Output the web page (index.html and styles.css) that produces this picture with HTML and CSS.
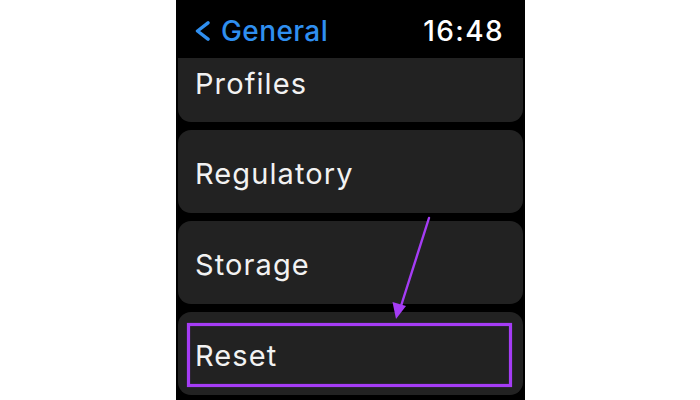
FILE: index.html
```html
<!DOCTYPE html>
<html>
<head>
<meta charset="utf-8">
<link rel="stylesheet" href="styles.css">
</head>
<body>
<div class="stage">
  <div class="watch">
    <div class="header">
      <div class="back">
        <svg class="chev" width="17" height="20" viewBox="0 0 17 20"><path d="M14 1.8 L3.5 10 L14 18.2" fill="none" stroke="#2f8ff0" stroke-width="3.4" stroke-linecap="round" stroke-linejoin="round"/></svg>
        <span class="back-label">General</span>
      </div>
      <span class="time">16:48</span>
    </div>
    <div class="list">
      <div class="item first">Profiles</div>
      <div class="item">Regulatory</div>
      <div class="item">Storage</div>
      <div class="item">Reset</div>
    </div>
  </div>
  <svg class="annot" width="700" height="400" viewBox="0 0 700 400">
    <rect x="188.5" y="324.5" width="322" height="61" fill="none" stroke="#a53cf5" stroke-width="3.2"/>
    <line x1="429" y1="218" x2="401" y2="306" stroke="#a53cf5" stroke-width="2.4" stroke-linecap="round"/>
    <path d="M396 319 L392.5 302 L406 306 Z" fill="#a53cf5"/>
  </svg>
</div>
</body>
</html>
```
FILE: styles.css
```css
html, body {
  margin: 0;
  padding: 0;
  background: #ffffff;
}
.stage {
  position: relative;
  width: 700px;
  height: 400px;
  display: flex;
  justify-content: center;
}
.watch {
  width: 349px;
  height: 400px;
  margin-left: 1px;
  background: #000000;
  overflow: hidden;
  display: flex;
  flex-direction: column;
  font-family: Inter, "Noto Sans", sans-serif;
}
.header {
  height: 58px;
  flex: none;
  display: flex;
  align-items: center;
  justify-content: space-between;
  padding: 4px 21px 0 18px;
  box-sizing: border-box;
}
.back {
  display: flex;
  align-items: center;
  gap: 10px;
}
.chev {
  display: block;
}
.back-label {
  color: #2f8ff0;
  font-size: 28px;
  font-weight: 500;
  letter-spacing: 0.4px;
}
.time {
  color: #ffffff;
  font-size: 28px;
  font-weight: 500;
  letter-spacing: 1.4px;
}
.list {
  flex: 1;
  overflow: hidden;
  padding: 0 2px;
  display: flex;
  flex-direction: column;
  gap: 8px;
}
.item {
  flex: none;
  height: 83px;
  box-sizing: border-box;
  padding-top: 3px;
  background: #222222;
  border-radius: 13px;
  display: flex;
  align-items: center;
  padding-left: 17px;
  color: #f2f2f2;
  font-size: 29px;
  font-weight: 400;
  letter-spacing: 1.1px;
}
.item.first {
  margin-top: -19px;
  padding-top: 6px;
}
.annot {
  position: absolute;
  left: 0;
  top: 0;
  pointer-events: none;
}
```
